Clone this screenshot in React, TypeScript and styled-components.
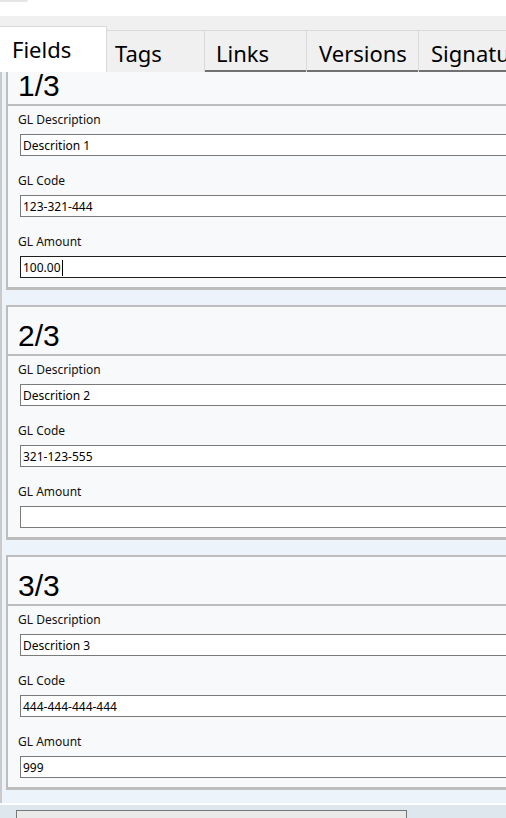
import React from "react";
import styled, { createGlobalStyle } from "styled-components";

const Global = createGlobalStyle`
  html, body { margin: 0; padding: 0; background: #ffffff; overflow: hidden; }
  * { box-sizing: border-box; }
`;

const Page = styled.div`
  width: 506px;
  height: 818px;
  display: flex;
  flex-direction: column;
  overflow: hidden;
  font-family: "Noto Sans", "DejaVu Sans", sans-serif;
  color: #000;
`;

const TopStrip = styled.div`
  height: 16px;
  flex-shrink: 0;
  background: #ffffff;
`;

const TopNub = styled.div`
  width: 28px;
  height: 2px;
  background: #e6e6e6;
  border-bottom-right-radius: 2px;
`;

const TabBar = styled.div`
  height: 56px;
  flex-shrink: 0;
  background: #f0f0f0;
  padding-top: 10px;
  display: flex;
  align-items: flex-start;
  overflow: hidden;
`;

const Tab = styled.div<{ $active?: boolean; $w: number; $pl: number; $line?: boolean }>`
  flex-shrink: 0;
  width: ${(p) => p.$w}px;
  height: ${(p) => (p.$active ? 46 : 42)}px;
  margin-top: ${(p) => (p.$active ? 0 : 4)}px;
  padding-top: 7px;
  padding-left: ${(p) => p.$pl}px;
  background: ${(p) => (p.$active ? "#ffffff" : "#f0f0f0")};
  border-top: 1px solid #d9d9d9;
  border-right: 1px solid #d9d9d9;
  box-shadow: ${(p) => (p.$line ? "inset 0 -2px 0 #717171" : "none")};
  font-size: 22px;
  line-height: 30px;
  white-space: nowrap;
`;

const Viewport = styled.div`
  height: 731px;
  flex-shrink: 0;
  overflow: hidden;
  background: #ecf3fb;
  border-left: 2px solid #cacaca;
  padding-left: 4px;
`;

const List = styled.div`
  width: 560px;
  margin-top: -32px;
  padding-top: 15px;
  display: flex;
  flex-direction: column;
  gap: 15px;
`;

const Panel = styled.section`
  background: #f8f9fb;
  border: 2px solid #bdbdbd;
  border-bottom-width: 3px;
`;

const PanelHeader = styled.div`
  height: 49px;
  padding: 12px 0 0 10px;
  border-bottom: 2px solid #bdbdbd;
  font-family: "Liberation Sans", Arial, sans-serif;
  font-size: 30px;
  line-height: 34px;
`;

const PanelBody = styled.div`
  padding: 6px 10px 9px 0;
  display: flex;
  flex-direction: column;
  gap: 17px;
`;

const Field = styled.div`
  display: flex;
  flex-direction: column;
`;

const Label = styled.div`
  padding-left: 10px;
  font-size: 12px;
  line-height: 16px;
  margin-bottom: 6px;
  color: #111;
`;

const TextBox = styled.div<{ $focused?: boolean }>`
  margin-left: 12px;
  height: 22px;
  background: #ffffff;
  border: 1px solid ${(p) => (p.$focused ? "#1e1e1e" : "#7a7a7a")};
  padding: 1px 0 0 2px;
  font-size: 12px;
  line-height: 20px;
  white-space: nowrap;
  overflow: hidden;
  color: #000;
`;

const Caret = styled.span`
  display: inline-block;
  width: 1px;
  height: 16px;
  background: #000;
  margin-left: 1px;
  vertical-align: -4px;
`;

const Footer = styled.div`
  flex: 1;
  background: #dee7ee;
  border-top: 2px solid #ffffff;
  padding: 5px 0 0 16px;
  overflow: hidden;
`;

const FooterButton = styled.div`
  width: 391px;
  height: 24px;
  background: #e9e9e9;
  border: 1px solid #767676;
`;

type Entry = { desc: string; code: string; amount: string; focused?: boolean };

const entries: Entry[] = [
  { desc: "Descrition 1", code: "123-321-444", amount: "100.00", focused: true },
  { desc: "Descrition 2", code: "321-123-555", amount: "" },
  { desc: "Descrition 3", code: "444-444-444-444", amount: "999" },
];

const tabs = [
  { label: "Fields", w: 107, pl: 12, active: true, line: false },
  { label: "Tags", w: 98, pl: 8, active: false, line: false },
  { label: "Links", w: 102, pl: 11, active: false, line: true },
  { label: "Versions", w: 112, pl: 12, active: false, line: true },
  { label: "Signatures", w: 140, pl: 12, active: false, line: true },
];

export default function App() {
  return (
    <Page>
      <Global />
      <TopStrip>
        <TopNub />
      </TopStrip>
      <TabBar>
        {tabs.map((t) => (
          <Tab key={t.label} $active={t.active} $w={t.w} $pl={t.pl} $line={t.line}>
            {t.label}
          </Tab>
        ))}
      </TabBar>
      <Viewport>
        <List>
          {entries.map((e, i) => (
            <Panel key={i}>
              <PanelHeader>
                {i + 1}/{entries.length}
              </PanelHeader>
              <PanelBody>
                <Field>
                  <Label>GL Description</Label>
                  <TextBox>{e.desc}</TextBox>
                </Field>
                <Field>
                  <Label>GL Code</Label>
                  <TextBox>{e.code}</TextBox>
                </Field>
                <Field>
                  <Label>GL Amount</Label>
                  <TextBox $focused={e.focused}>
                    {e.amount}
                    {e.focused && <Caret />}
                  </TextBox>
                </Field>
              </PanelBody>
            </Panel>
          ))}
        </List>
      </Viewport>
      <Footer>
        <FooterButton />
      </Footer>
    </Page>
  );
}
